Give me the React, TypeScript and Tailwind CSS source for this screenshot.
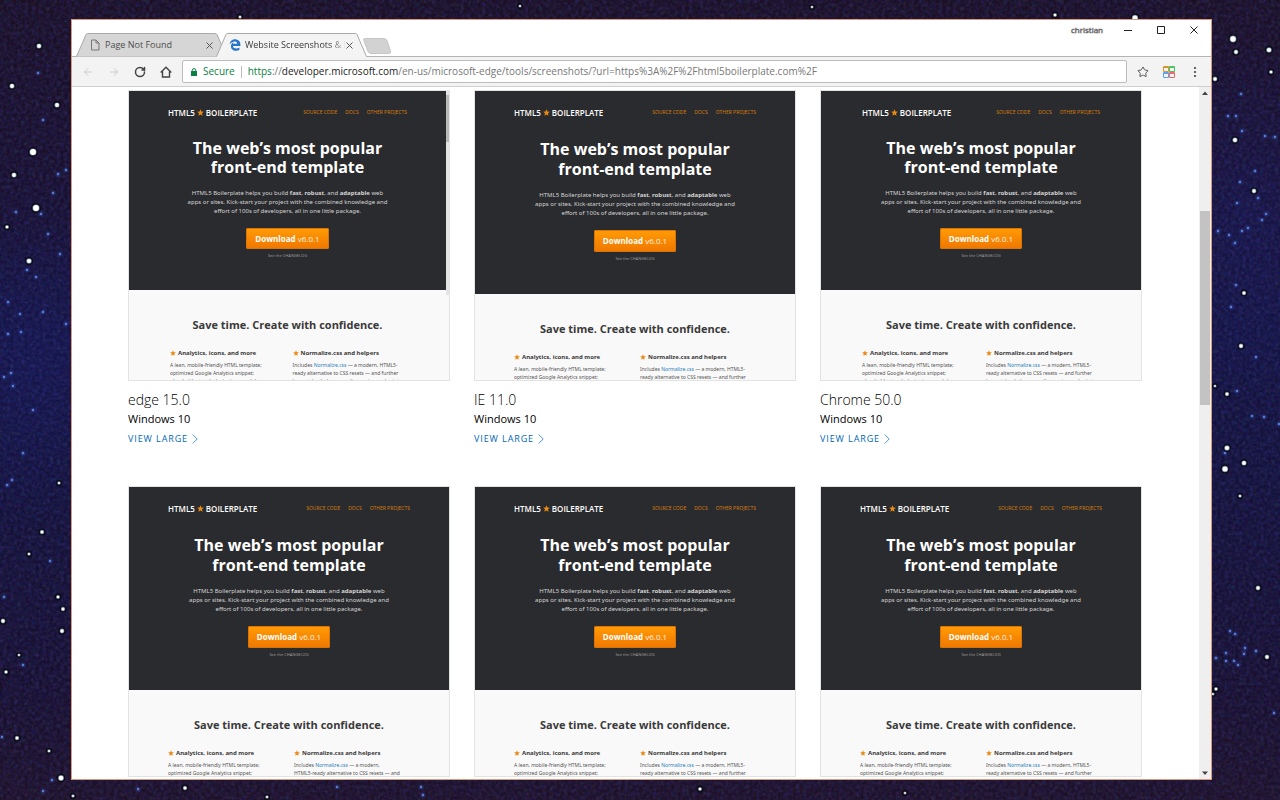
import { clsx } from "clsx";
import { ArrowLeft, ArrowRight, RotateCw, Star } from "lucide-react";
import type { ReactNode } from "react";
import { FaEdgeLegacy } from "react-icons/fa6";

type ShotSize = "regular" | "compact";

interface IShot {
	id: string;
	browser?: string;
	os?: string;
	size: ShotSize;
	hasScrollbar?: boolean;
	breakAfterModern?: boolean;
}

const SHOTS: IShot[] = [
	{ id: "edge", browser: "edge 15.0", os: "Windows 10", size: "compact", hasScrollbar: true },
	{ id: "ie", browser: "IE 11.0", os: "Windows 10", size: "regular" },
	{ id: "chrome", browser: "Chrome 50.0", os: "Windows 10", size: "compact" },
	{ id: "shot-4", size: "regular", breakAfterModern: true },
	{ id: "shot-5", size: "regular" },
	{ id: "shot-6", size: "regular" },
];

// x, y, radius
const BRIGHT_STARS = [
	[39, 46, 3], [12, 86, 3], [57, 105, 3], [33, 152, 4], [14, 175, 3], [36, 208, 4], [7, 227, 2.4],
	[29, 261, 3.2], [59, 483, 2.2], [42, 532, 2.6], [29, 554, 2.2], [58, 597, 2.4], [63, 609, 2.6],
	[3, 621, 2.8], [62, 631, 2.8], [19, 655, 2], [6, 672, 2.4], [17, 738, 2.6], [49, 751, 2.2],
	[61, 778, 3.4], [73, 796, 2.2], [1233, 39, 3.8], [1236, 52, 2.8], [1269, 50, 3.2], [1271, 72, 2.4],
	[1215, 79, 2.8], [1235, 140, 3], [1254, 191, 2.8], [1244, 293, 2.6], [1241, 346, 2.8],
	[1227, 394, 2.6], [1215, 386, 2], [1227, 448, 3.2], [1244, 463, 3], [1225, 469, 3.6],
	[1240, 496, 2.2], [1258, 588, 2.8], [1267, 657, 2.8], [1216, 689, 2.4], [1213, 694, 2],
	[240, 17, 2.2], [1055, 15, 2.4], [1135, 18, 3.6], [185, 788, 2.6], [267, 797, 2.2], [520, 6, 2],
	[700, 789, 2.4], [905, 793, 2], [812, 7, 2],
];

const DIM_STARS = [
	[38, 73], [43, 120], [66, 170], [58, 174], [53, 193], [16, 212], [41, 214], [48, 234], [60, 254],
	[27, 270], [36, 277], [8, 302], [20, 314], [43, 312], [66, 324], [8, 334], [21, 332], [11, 373],
	[4, 377], [13, 386], [33, 410], [23, 453], [12, 480], [7, 485], [50, 561], [4, 597], [23, 665],
	[2, 737], [43, 791], [52, 780], [1241, 94], [1228, 116], [1236, 116], [1242, 131], [1265, 136],
	[1275, 137], [1255, 171], [1240, 182], [1237, 203], [1262, 220], [1266, 214], [1218, 231],
	[1229, 235], [1242, 231], [1248, 228], [1235, 243], [1236, 285], [1231, 307], [1256, 357],
	[1237, 391], [1225, 453], [1230, 631], [1235, 634], [1226, 653], [1226, 661], [1234, 661],
	[1245, 648], [1244, 654], [1256, 651], [1216, 658], [1238, 665], [1274, 713], [1279, 424],
	[138, 789], [337, 787], [421, 787], [423, 795], [1252, 416], [1264, 417], [1258, 198],
];

function Starfield() {
	return (
		<svg
			className="absolute inset-0 h-full w-full"
			viewBox="0 0 1280 800"
			preserveAspectRatio="xMidYMid slice"
			aria-hidden="true"
		>
			<defs>
				<linearGradient id="sky" x1="0" y1="0" x2="0" y2="1">
					<stop offset="0" stopColor="#1b0f24" />
					<stop offset="0.22" stopColor="#190f2c" />
					<stop offset="0.42" stopColor="#14123e" />
					<stop offset="0.6" stopColor="#141138" />
					<stop offset="0.85" stopColor="#180f2e" />
					<stop offset="1" stopColor="#1e1026" />
				</linearGradient>
				<radialGradient id="haze">
					<stop offset="0" stopColor="#17185a" stopOpacity="0.5" />
					<stop offset="1" stopColor="#17185a" stopOpacity="0" />
				</radialGradient>
				<filter id="grain" x="0" y="0" width="100%" height="100%">
					<feTurbulence type="fractalNoise" baseFrequency="0.28" numOctaves="3" seed="4" />
					<feColorMatrix values="0.3 0 0 0 -0.08  0 0.3 0 0 -0.06  0 0 1.2 0 -0.2  0 0 0 1.6 -0.4" />
				</filter>
			</defs>
			<rect width="1280" height="800" fill="url(#sky)" />
			<ellipse cx="1246" cy="220" rx="110" ry="180" fill="url(#haze)" />
			<ellipse cx="30" cy="370" rx="110" ry="150" fill="url(#haze)" />
			<rect width="1280" height="800" filter="url(#grain)" opacity="0.28" />
			{DIM_STARS.map(([x, y]) => (
				<g key={`${x}-${y}`}>
					<circle cx={x} cy={y} r="2.6" fill="#2f49b0" opacity="0.4" />
					<circle cx={x} cy={y} r="1.2" fill="#6c94e0" opacity="0.8" />
				</g>
			))}
			{BRIGHT_STARS.map(([x, y, r]) => (
				<g key={`${x}-${y}`}>
					<circle cx={x} cy={y} r={r + 1} fill="#05040c" opacity="0.7" />
					<circle cx={x} cy={y} r={r - 0.4} fill="#8fb2c8" opacity="0.7" />
					<circle cx={x} cy={y} r={r - 1.1} fill="#ffffff" />
				</g>
			))}
		</svg>
	);
}

function Tab({ title, icon, active }: { title: string; icon: ReactNode; active?: boolean }) {
	return (
		<div className={clsx("relative h-6 w-[151px]", active ? "z-10" : "z-0")}>
			<svg
				className="absolute inset-0 h-full w-full"
				viewBox="0 0 151 24"
				preserveAspectRatio="none"
				aria-hidden="true"
			>
				<path
					d="M0.5 23.5 L10 1.500 Q10.500 0.5 12 0.5 H139 Q140.500 0.5 141 1.500 L150.500 23.5"
					fill={active ? "#f4f4f4" : "#d6d6d6"}
					stroke="#a9a9a9"
				/>
				{active && <path d="M1 23.5 H150" stroke="#f4f4f4" strokeWidth="1" />}
			</svg>
			<div className="relative flex h-full items-center pr-3.5 pl-[13px]">
				<button type="button" className="flex min-w-0 flex-1 items-center gap-1">
					{icon}
					<span
						className={clsx(
							"flex-1 overflow-hidden text-left text-[9px] whitespace-nowrap",
							active
								? "bg-linear-to-r from-[#333333] from-85% to-transparent bg-clip-text text-transparent"
								: "text-[#4d4d4d]",
						)}
					>
						{title}
					</span>
				</button>
				<button type="button" aria-label={`Close ${title}`} className="shrink-0">
					<svg className="h-[7px] w-[7px]" viewBox="0 0 7 7" aria-hidden="true">
						<path d="M0.500 0.500 L6.500 6.500 M6.500 0.500 L0.500 6.500" stroke="#555555" />
					</svg>
				</button>
			</div>
		</div>
	);
}

function TabStrip() {
	return (
		<div className="flex h-[37px] shrink-0 items-stretch justify-between border-b border-[#b4b4b4] bg-white">
			<div className="-mb-px flex items-end pl-1">
				<Tab
					title="Page Not Found"
					icon={
						<svg className="h-3 w-3 shrink-0" viewBox="0 0 12 12" fill="none" aria-hidden="true">
							<path d="M2.500 1 H7 L10 4 V11 H2.500 Z M7 1 V4 H10" stroke="#777777" />
						</svg>
					}
				/>
				<div className="-ml-[11px]">
					<Tab
						active
						title="Website Screenshots & P"
						icon={<FaEdgeLegacy className="h-3 w-3 shrink-0 text-[#2876c8]" />}
					/>
				</div>
				<button type="button" aria-label="New tab" className="-ml-1 pb-[3px]">
					<svg className="h-4 w-7" viewBox="0 0 28 16" aria-hidden="true">
						<path
							d="M1.500 0.500 H21 Q23 0.500 24 2.500 L27.500 13 Q28 15.500 26 15.500 H8 Q6 15.500 5 13.500 L0.800 2.500 Q0 0.500 1.500 0.500 Z"
							fill="#d2d2d2"
							stroke="#c6c6c6"
						/>
					</svg>
				</button>
			</div>
			<div className="flex h-5 items-center pr-[13px]">
				<span className="mr-[21px] text-[8px] text-[#444444] [-webkit-text-stroke:1px_#c4c4c4] [paint-order:stroke]">
					christian
				</span>
				<div className="flex items-center gap-[25px]">
					<button type="button" aria-label="Minimize">
						<svg className="h-2 w-2" viewBox="0 0 8 8" aria-hidden="true">
							<path d="M0 4.500 H8" stroke="#222222" />
						</svg>
					</button>
					<button type="button" aria-label="Maximize">
						<svg className="h-2 w-2" viewBox="0 0 8 8" fill="none" aria-hidden="true">
							<path d="M0.500 0.500 H7.500 V7.500 H0.500 Z" stroke="#222222" />
						</svg>
					</button>
					<button type="button" aria-label="Close window">
						<svg className="h-2 w-2" viewBox="0 0 8 8" aria-hidden="true">
							<path d="M0.500 0.500 L7.500 7.500 M7.500 0.500 L0.500 7.500" stroke="#222222" />
						</svg>
					</button>
				</div>
			</div>
		</div>
	);
}

function Toolbar() {
	return (
		<div className="flex h-[30px] shrink-0 items-center border-b border-[#cfcfcf] bg-[#f3f3f3] px-2.5">
			<div className="flex items-center gap-[14px] pr-2.5">
				<button type="button" aria-label="Back" disabled className="text-[#cccccc]">
					<ArrowLeft size={12} strokeWidth={2} />
				</button>
				<button type="button" aria-label="Forward" disabled className="text-[#cccccc]">
					<ArrowRight size={12} strokeWidth={2} />
				</button>
				<button type="button" aria-label="Reload" className="text-[#444444]">
					<RotateCw size={12} strokeWidth={3} />
				</button>
				<button type="button" aria-label="Home">
					<svg className="h-3 w-3" viewBox="0 0 12 12" fill="none" aria-hidden="true">
						<path
							d="M0.700 6.500 L6 1.200 L11.300 6.500 M2.500 5.500 V11 H9.500 V5.500"
							stroke="#444444"
							strokeWidth="1.4"
						/>
					</svg>
				</button>
			</div>
			<div className="flex h-[23px] min-w-0 flex-1 items-center rounded-xs border border-[#bcbcbc] bg-white pl-2 text-[10px]">
				<svg className="mr-1.5 h-2 w-1.5 shrink-0" viewBox="0 0 6 8" aria-hidden="true">
					<path d="M1.300 3.500 V2.300 Q1.300 0.600 3 0.600 Q4.700 0.600 4.700 2.300 V3.500" fill="none" stroke="#0b8043" />
					<path d="M0 3 H6 V8 H0 Z" fill="#0b8043" />
				</svg>
				<span className="mr-1.5 text-[#0b8043]">Secure</span>
				<span className="mr-1.5 h-3 w-px bg-[#bbbbbb]" />
				<label htmlFor="address" className="shrink-0 text-[#777777]">
					<span className="text-[#0b8043]">https</span>://
					<span className="text-[#222222]">developer.microsoft.com</span>
				</label>
				<input
					id="address"
					type="text"
					className="min-w-0 flex-1 bg-transparent text-[#777777] outline-none"
					defaultValue="/en-us/microsoft-edge/tools/screenshots/?url=https%3A%2F%2Fhtml5boilerplate.com%2F"
				/>
			</div>
			<div className="flex items-center gap-[14px] pl-2.5">
				<button type="button" aria-label="Bookmark this page">
					<Star size={12} strokeWidth={2} className="text-[#555555]" />
				</button>
				<button type="button" aria-label="Screenshots extension">
					<svg className="h-3 w-3" viewBox="0 0 12 12" fill="none" aria-hidden="true">
						<path d="M0.500 0.500 H5.500 V5.500 H0.500 Z M0.500 1.500 H5.500" stroke="#d9962f" />
						<path d="M6.500 0.500 H11.500 V5.500 H6.500 Z M6.500 1.500 H11.500" stroke="#4fc060" />
						<path d="M0.500 6.500 H5.500 V11.500 H0.500 Z M0.500 7.500 H5.500" stroke="#5aa5ee" />
						<path d="M6.500 6.500 H11.500 V11.500 H6.500 Z M6.500 7.500 H11.500" stroke="#ee6a6a" />
					</svg>
				</button>
				<button type="button" aria-label="Menu">
					<svg className="h-3 w-3" viewBox="0 0 12 12" fill="#444444" aria-hidden="true">
						<circle cx="6" cy="2" r="1.100" />
						<circle cx="6" cy="6" r="1.100" />
						<circle cx="6" cy="10" r="1.100" />
					</svg>
				</button>
			</div>
		</div>
	);
}

function StarMark({ className }: { className?: string }) {
	return (
		<svg className={clsx("shrink-0", className)} viewBox="0 0 24 24" fill="#e98a15" aria-hidden="true">
			<path d="M12 1 L15.200 8.600 L23.500 9.300 L17.200 14.700 L19.100 22.800 L12 18.500 L4.900 22.800 L6.800 14.700 L0.500 9.300 L8.800 8.600 Z" />
		</svg>
	);
}

function Screenshot({ shot }: { shot: IShot }) {
	const compact = shot.size === "compact";

	return (
		<div
			className={clsx(
				"relative h-[291px] overflow-hidden border border-[#e3e3e3] bg-[#f9f9f9] font-['Noto_Sans',sans-serif] whitespace-nowrap",
				shot.hasScrollbar && "pr-[3px]",
			)}
		>
			<div
				className={clsx(
					"flex flex-col items-center bg-[#2a2b2e] pt-4",
					compact ? "h-[199px]" : "h-[203px]",
				)}
			>
				<div
					className={clsx(
						"flex h-[11px] w-full items-center justify-between font-['Open_Sans',sans-serif]",
						compact && !shot.hasScrollbar ? "px-[41px]" : "px-[39px]",
					)}
				>
					<span className="flex items-center gap-0.5 text-[8px] leading-2 font-semibold text-white">
						HTML5 <StarMark className="h-[7px] w-[7px]" /> BOILERPLATE
					</span>
					<nav className="flex gap-2 font-['Noto_Sans',sans-serif] text-[5px] text-[#d17c0e]">
						<a href="#source">SOURCE CODE</a>
						<a href="#docs">DOCS</a>
						<a href="#projects">OTHER PROJECTS</a>
					</nav>
				</div>
				<h2
					className={clsx(
						"mt-[21px] text-center font-['Open_Sans',sans-serif] text-[16px] font-bold text-white",
						compact ? "leading-[19px]" : "leading-5",
					)}
				>
					The web’s most popular
					<br />
					front-end template
				</h2>
				<p className="mt-3 text-center text-[6px] leading-[9px] text-[#d4d4d4]">
					HTML5 Boilerplate helps you build <b>fast</b>, <b>robust</b>, and <b>adaptable</b> web
					<br />
					apps or sites. Kick-start your project with the combined knowledge and
					<br />
					effort of 100s of developers, all in one little package.
				</p>
				<button
					type="button"
					className={clsx(
						"mt-3 rounded-[1px] border border-[#d87408] bg-linear-to-b from-[#ff9a05] to-[#f07800] px-2 font-['Open_Sans',sans-serif] text-[8px] text-[#fff3e0]",
						compact ? "h-[21px]" : "h-[22px]",
					)}
				>
					<b className="text-white">Download</b> v6.0.1
				</button>
				<a href="#changelog" className="mt-1 text-[4px] leading-[6px] text-[#9a9a9a]">
					See the CHANGELOG
				</a>
			</div>
			<div className={clsx("pt-7 text-[#3a3a3a]", compact ? "px-[41px]" : "px-[39px]")}>
				<h3 className="text-center font-['Open_Sans',sans-serif] text-[11px] leading-[14px] font-bold">
					Save time. Create with confidence.
				</h3>
				<div className="mt-[17px] grid grid-cols-2 gap-2.5">
					<div>
						<h4 className="flex items-center gap-0.5 text-[6px] leading-2 font-bold">
							<StarMark className="h-1.5 w-1.5" /> Analytics, icons, and more
						</h4>
						<p className="mt-1 text-[5px] leading-2 text-[#555555]">
							A lean, mobile-friendly HTML template;
							<br />
							optimized Google Analytics snippet;
							<br />
							placeholder touch-device icon; and docs
						</p>
					</div>
					<div>
						<h4 className="flex items-center gap-0.5 text-[6px] leading-2 font-bold">
							<StarMark className="h-1.5 w-1.5" /> Normalize.css and helpers
						</h4>
						<p className="mt-1 text-[5px] leading-2 text-[#555555]">
							Includes{" "}
							<a href="#normalize" className="text-[#2a7fb8]">
								Normalize.css
							</a>{" "}
							— a modern, {!shot.breakAfterModern && "HTML5-"}
							<br />
							{shot.breakAfterModern && "HTML5-"}ready alternative to CSS resets — and
							{!shot.breakAfterModern && " further"}
							<br />
							base styles, helpers, media queries, and print
						</p>
					</div>
				</div>
			</div>
			{shot.hasScrollbar && (
				<div className="absolute top-0 right-0 h-[204px] w-[3px] bg-[#e4e4e4] pt-1">
					<div className="h-[47px] bg-[#b9b9b9]" />
				</div>
			)}
		</div>
	);
}

function ShotCard({ shot }: { shot: IShot }) {
	return (
		<article className="min-w-0 pb-[39px]">
			<Screenshot shot={shot} />
			{shot.browser && (
				<>
					<h2 className="mt-2 text-[14px] leading-[22px] font-light text-black">{shot.browser}</h2>
					<p className="text-[11px] leading-4 text-black">{shot.os}</p>
					<a
						href={`#${shot.id}`}
						className="mt-1 flex items-center gap-1 text-[9px] leading-4 tracking-widest text-[#0067b8]"
					>
						VIEW LARGE
						<svg className="h-2.5 w-1.5" viewBox="0 0 6 10" fill="none" aria-hidden="true">
							<path d="M0.700 0.500 L5.200 5 L0.700 9.500" stroke="#3d8ad0" strokeWidth="0.9" />
						</svg>
					</a>
				</>
			)}
		</article>
	);
}

function PageScrollbar() {
	return (
		<div className="flex w-3 shrink-0 flex-col items-center bg-[#efefef]">
			<svg className="h-3 w-3" viewBox="0 0 12 12" fill="#444444" aria-hidden="true">
				<path d="M3 8 L6 4.500 L9 8 Z" />
			</svg>
			<div className="flex w-full flex-1 flex-col">
				<div className="basis-[112px]" />
				<div className="mx-px h-[194px] shrink-0 bg-[#c3c3c3]" />
			</div>
			<svg className="h-3 w-3" viewBox="0 0 12 12" fill="#444444" aria-hidden="true">
				<path d="M3 4.500 L6 8 L9 4.500 Z" />
			</svg>
		</div>
	);
}

export default function App() {
	return (
		<div className="relative h-screen overflow-hidden bg-[#171236] pt-[19px] pr-[68px] pb-5 pl-[71px] font-['Open_Sans','Noto_Sans',sans-serif]">
			<Starfield />
			<div className="relative flex h-full flex-col overflow-hidden border border-[#d99a7c] bg-white">
				<TabStrip />
				<Toolbar />
				<div className="flex min-h-0 flex-1">
					<main className="min-w-0 flex-1 overflow-hidden pt-[3px] pr-[57px] pl-14">
						<div className="grid grid-cols-3 gap-x-6">
							{SHOTS.map((shot) => (
								<ShotCard key={shot.id} shot={shot} />
							))}
						</div>
					</main>
					<PageScrollbar />
				</div>
			</div>
		</div>
	);
}
